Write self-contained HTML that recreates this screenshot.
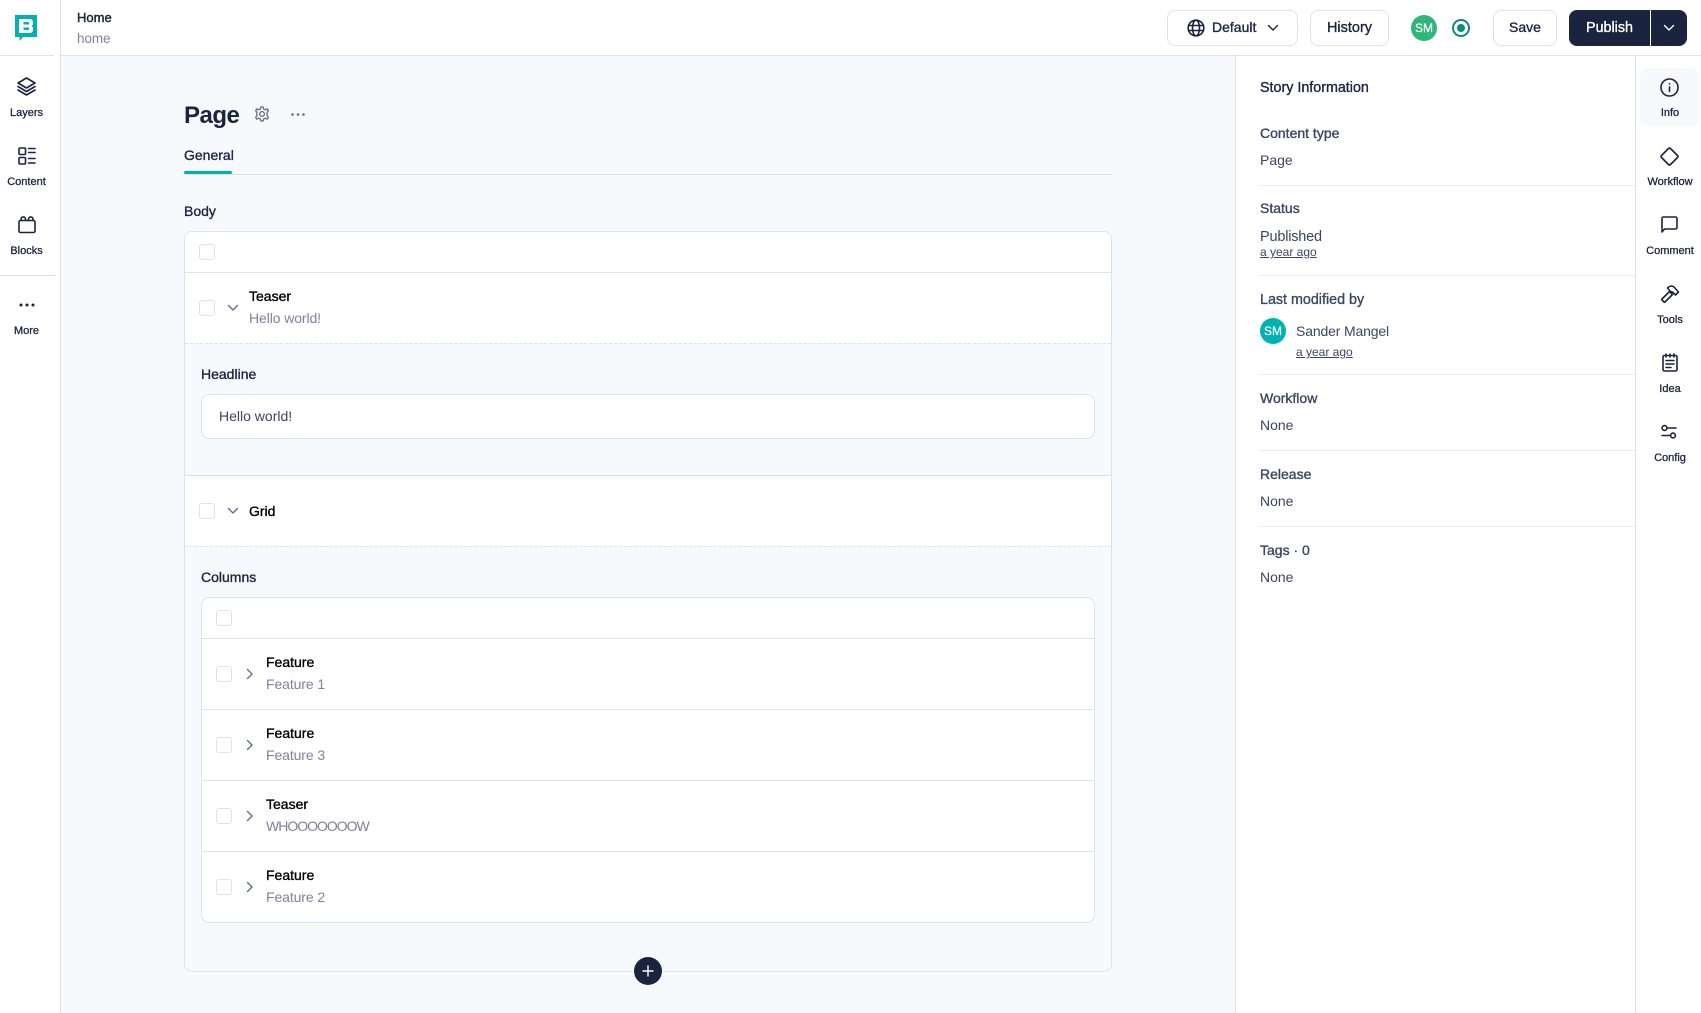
<!DOCTYPE html>
<html><head><meta charset="utf-8"><style>
*{box-sizing:border-box}
html,body{margin:0;padding:0}
body{width:1701px;height:1013px;overflow:hidden;position:relative;background:#f8f9fd;font-family:"Liberation Sans",sans-serif;color:#1b243f}
.a{position:absolute}
.t{position:absolute;white-space:nowrap;line-height:20px;height:20px;font-size:14px}
.d{margin-top:1px}
.m{-webkit-text-stroke:.35px currentColor}
.g{color:#7d829d;letter-spacing:-.1px}
.l{color:#3c4563}
.c{position:absolute;width:16px;height:16px;border:1px solid #dfe2ea;border-radius:3px;background:#fff}
.h{position:absolute;height:1px;background:#dfe2ea}
.lab{position:absolute;width:60px;text-align:center;font-size:11px;line-height:14px;color:#1b243f;-webkit-text-stroke:.3px currentColor;white-space:nowrap;margin-top:1px}
.btn{position:absolute;top:10px;height:36px;border:1px solid #dfe2ea;border-radius:8px;background:#fff}
svg{position:absolute;overflow:visible;fill:none;stroke:#1b243f;stroke-width:1.6;stroke-linecap:round;stroke-linejoin:round}
u{text-underline-offset:1px}
.ch{stroke:#666c88;stroke-width:1.4}
</style></head><body>

<!-- Main backgrounds -->
<div class="a" style="left:0;top:0;width:1701px;height:55px;background:#fff"></div>
<div class="h" style="left:60px;top:55px;width:1641px"></div>
<div class="a" style="left:0;top:0;width:61px;height:1013px;background:#fff;border-right:1px solid #dfe2ea"></div>
<div class="a" style="left:1235px;top:56px;width:466px;height:957px;background:#fff;border-left:1px solid #e3e5ee"></div>
<div class="a" style="left:1635px;top:56px;width:1px;height:957px;background:#dfe2ea"></div>

<!-- Left rail -->
<div class="h" style="left:0;top:55px;width:54px"></div>
<div class="h" style="left:0;top:275px;width:56px"></div>
<svg style="left:15px;top:15px" width="22" height="27" viewBox="0 0 22 27"><path style="stroke:none;fill:#00b3b0" d="M0 0H22V22H8L4.500 26V22H0Z"/><path style="stroke:none;fill:#fff" d="M4 4H16L18 6V9.500L16.500 11L18 12.500V16L16 18H4ZM8.500 7V9.500H14V7ZM8.500 12.500V15H14V12.500Z" fill-rule="evenodd"/></svg>

<svg style="left:17px;top:77px" width="19" height="19" viewBox="0 0 19 19"><path d="M9.500 1L18 6 9.500 11 1 6Z"/><path d="M1 9.500L9.500 14.500 18 9.500"/><path d="M1 13L9.500 18 18 13"/></svg>
<div class="lab" style="left:-3.500px;top:105px">Layers</div>
<svg style="left:18px;top:147px" width="18" height="18" viewBox="0 0 18 18"><rect x="1" y="1" width="6.500" height="6.500" rx="1"/><rect x="1" y="10.500" width="6.500" height="6.500" rx="1"/><path d="M10.500 1.500H17M10.500 5.500H17M10.500 11.500H17M10.500 16H17"/></svg>
<div class="lab" style="left:-3.500px;top:174px">Content</div>
<svg style="left:18px;top:216px" width="18" height="18" viewBox="0 0 18 18"><rect x="1" y="4.500" width="16" height="12" rx="1.500"/><path d="M3 4.500V3.200A1.800 1.800 0 0 1 7.500 3.200V4.500M10.500 4.500V3.200A1.800 1.800 0 0 1 15 3.200V4.500"/></svg>
<div class="lab" style="left:-3.500px;top:243px">Blocks</div>
<svg style="left:19px;top:303px" width="16" height="4" viewBox="0 0 16 4"><circle cx="2" cy="2" r="1.500" style="fill:#1b243f;stroke:none"/><circle cx="8" cy="2" r="1.500" style="fill:#1b243f;stroke:none"/><circle cx="14" cy="2" r="1.500" style="fill:#1b243f;stroke:none"/></svg>
<div class="lab" style="left:-3.500px;top:323px">More</div>

<!-- Top left text -->
<div class="t m d" style="left:77px;top:7px;font-size:13px;-webkit-text-stroke:.45px currentColor">Home</div>
<div class="t g d" style="left:77px;top:28px;font-size:13.500px">home</div>

<!-- Top right -->
<div class="btn" style="left:1167px;width:131px"></div>
<svg style="left:1187px;top:19px" width="18" height="18" viewBox="0 0 18 18"><circle cx="9" cy="9" r="7.800"/><ellipse cx="9" cy="9" rx="3.500" ry="7.800"/><path d="M1.500 6.500H16.500M1.500 11.500H16.500"/></svg>
<div class="t m" style="left:1212px;top:17px">Default</div>
<svg style="left:1267px;top:24px;stroke-width:1.400" width="12" height="8" viewBox="0 0 12 8"><path d="M1.500 1.500L6 6 10.500 1.500"/></svg>
<div class="btn" style="left:1310px;width:79px"></div>
<div class="t m d" style="left:1310px;width:79px;text-align:center;top:17px;font-size:14.500px">History</div>
<div class="a" style="left:1411px;top:15px;width:26px;height:26px;border-radius:50%;background:#2eb67d;color:#fff;font-size:12px;line-height:27px;text-align:center;-webkit-text-stroke:.2px #fff">SM</div>
<div class="a" style="left:1452px;top:19px;width:18px;height:18px;border-radius:50%;border:2px solid #0a8a80"></div>
<div class="a" style="left:1457px;top:24px;width:8px;height:8px;border-radius:50%;background:#0a8a80"></div>
<div class="btn" style="left:1493px;width:64px"></div>
<div class="t m" style="left:1493px;width:64px;text-align:center;top:17px">Save</div>
<div class="a" style="left:1569px;top:10px;width:118px;height:36px;background:#1b243f;border-radius:8px"></div>
<div class="a" style="left:1650px;top:10px;width:1px;height:36px;background:#fff"></div>
<div class="t m d" style="left:1569px;width:81px;text-align:center;top:17px;font-size:14.300px;color:#fff">Publish</div>
<svg style="left:1663px;top:24px;stroke:#fff;stroke-width:1.400" width="12" height="8" viewBox="0 0 12 8"><path d="M1.500 1.500L6 6 10.500 1.500"/></svg>

<!-- Page head -->
<div class="t d" style="left:184px;top:103px;font-size:24px;font-weight:bold;line-height:24px;height:24px;letter-spacing:-.5px">Page</div>
<svg style="left:254px;top:106px;stroke:#666c88;stroke-width:1.300" width="16" height="16" viewBox="0 0 16 16"><circle cx="8" cy="8" r="2.400"/><path d="M6.800 1H9.200L9.600 3 11.300 3.800 13.100 2.800 14.400 4.700 13 6.200 13.200 8 13 9.800 14.400 11.300 13.100 13.200 11.300 12.200 9.600 13 9.200 15H6.800L6.400 13 4.700 12.200 2.900 13.200 1.600 11.300 3 9.800 2.800 8 3 6.200 1.600 4.700 2.900 2.800 4.700 3.800 6.400 3Z"/></svg>
<svg style="left:291px;top:113px" width="14" height="3" viewBox="0 0 14 3"><circle cx="1.500" cy="1.500" r="1.300" style="fill:#666c88;stroke:none"/><circle cx="7" cy="1.500" r="1.300" style="fill:#666c88;stroke:none"/><circle cx="12.500" cy="1.500" r="1.300" style="fill:#666c88;stroke:none"/></svg>
<div class="t m" style="left:184px;top:145px">General</div>
<div class="a" style="left:184px;top:174px;width:928px;height:1px;background:#dfe2ea"></div>
<div class="a" style="left:184px;top:171px;width:48px;height:3px;background:#00b3b0;border-radius:2px"></div>
<div class="t m" style="left:184px;top:201px">Body</div>

<!-- Body box -->
<div class="a" style="left:184px;top:231px;width:928px;height:741px;border:1px solid #dfe2ea;border-radius:8px;background:#f8f9fd"></div>
<div class="a" style="left:185px;top:232px;width:926px;height:40px;background:#fff;border-radius:7px 7px 0 0"></div>
<div class="c" style="left:199px;top:244px"></div>
<div class="h" style="left:185px;top:272px;width:926px"></div>
<div class="a" style="left:185px;top:273px;width:926px;height:70px;background:#fff"></div>
<div class="c" style="left:199px;top:300px"></div>
<svg class="ch" style="left:227px;top:304px" width="12" height="8" viewBox="0 0 12 8"><path d="M1.500 1.500L6 6 10.500 1.500"/></svg>
<div class="t m" style="left:249px;top:286px;color:#000">Teaser</div>
<div class="t g" style="left:249px;top:308px">Hello world!</div>
<div class="a" style="left:185px;top:343px;width:926px;border-top:1px dashed #dfe2ea"></div>
<div class="t m" style="left:201px;top:364px">Headline</div>
<div class="a" style="left:201px;top:394px;width:894px;height:45px;background:#fff;border:1px solid #dfe2ea;border-radius:8px"></div>
<div class="t l" style="left:219px;top:406px">Hello world!</div>
<div class="h" style="left:185px;top:475px;width:926px"></div>
<div class="a" style="left:185px;top:476px;width:926px;height:70px;background:#fff"></div>
<div class="c" style="left:199px;top:503px"></div>
<svg class="ch" style="left:227px;top:507px" width="12" height="8" viewBox="0 0 12 8"><path d="M1.500 1.500L6 6 10.500 1.500"/></svg>
<div class="t m" style="left:249px;top:501px;color:#000">Grid</div>
<div class="a" style="left:185px;top:546px;width:926px;border-top:1px dashed #dfe2ea"></div>
<div class="t m" style="left:201px;top:567px">Columns</div>

<!-- Columns box -->
<div class="a" style="left:201px;top:597px;width:894px;height:326px;background:#fff;border:1px solid #dfe2ea;border-radius:8px"></div>
<div class="c" style="left:216px;top:610px"></div>
<div class="h" style="left:202px;top:638px;width:892px"></div>
<div class="c" style="left:216px;top:666px"></div>
<svg class="ch" style="left:246px;top:668px" width="8" height="12" viewBox="0 0 8 12"><path d="M1.500 1.500L6 6 1.500 10.500"/></svg>
<div class="t m" style="left:266px;top:652px;color:#000">Feature</div>
<div class="t g" style="left:266px;top:674px">Feature 1</div>
<div class="h" style="left:202px;top:709px;width:892px"></div>
<div class="c" style="left:216px;top:737px"></div>
<svg class="ch" style="left:246px;top:739px" width="8" height="12" viewBox="0 0 8 12"><path d="M1.500 1.500L6 6 1.500 10.500"/></svg>
<div class="t m" style="left:266px;top:723px;color:#000">Feature</div>
<div class="t g" style="left:266px;top:745px">Feature 3</div>
<div class="h" style="left:202px;top:780px;width:892px"></div>
<div class="c" style="left:216px;top:808px"></div>
<svg class="ch" style="left:246px;top:810px" width="8" height="12" viewBox="0 0 8 12"><path d="M1.500 1.500L6 6 1.500 10.500"/></svg>
<div class="t m" style="left:266px;top:794px;color:#000">Teaser</div>
<div class="t g" style="left:266px;top:816px;letter-spacing:-1px">WHOOOOOOOW</div>
<div class="h" style="left:202px;top:851px;width:892px"></div>
<div class="c" style="left:216px;top:879px"></div>
<svg class="ch" style="left:246px;top:881px" width="8" height="12" viewBox="0 0 8 12"><path d="M1.500 1.500L6 6 1.500 10.500"/></svg>
<div class="t m" style="left:266px;top:865px;color:#000">Feature</div>
<div class="t g" style="left:266px;top:887px">Feature 2</div>

<!-- Plus -->
<div class="a" style="left:634px;top:957px;width:28px;height:28px;border-radius:50%;background:#1b243f"></div>
<svg style="left:642px;top:965px;stroke:#fff;stroke-width:1.400" width="12" height="12" viewBox="0 0 12 12"><path d="M6 1V11M1 6H11"/></svg>

<!-- Story info -->
<div class="t m d" style="left:1260px;top:77px;font-size:14.300px">Story Information</div>
<div class="t m l" style="left:1260px;top:123px">Content type</div>
<div class="t l" style="left:1260px;top:150px">Page</div>
<div class="h" style="left:1260px;top:185px;width:375px;background:#e9ebf0"></div>
<div class="t m l" style="left:1260px;top:198px">Status</div>
<div class="t l d" style="left:1260px;top:226px;font-size:14.500px;letter-spacing:-.2px">Published</div>
<div class="t l" style="left:1260px;top:242px;font-size:12px"><u>a year ago</u></div>
<div class="h" style="left:1260px;top:275px;width:375px;background:#e9ebf0"></div>
<div class="t m l d" style="left:1260px;top:289px;font-size:14.300px">Last modified by</div>
<div class="a" style="left:1260px;top:318px;width:26px;height:26px;border-radius:50%;background:#00b3b0;color:#fff;font-size:12px;line-height:27px;text-align:center;-webkit-text-stroke:.2px #fff">SM</div>
<div class="t l" style="left:1296px;top:321px;letter-spacing:-.15px">Sander Mangel</div>
<div class="t l" style="left:1296px;top:342px;font-size:12px"><u>a year ago</u></div>
<div class="h" style="left:1260px;top:374px;width:375px;background:#e9ebf0"></div>
<div class="t m l" style="left:1260px;top:388px">Workflow</div>
<div class="t l" style="left:1260px;top:415px">None</div>
<div class="h" style="left:1260px;top:450px;width:375px;background:#e9ebf0"></div>
<div class="t m l" style="left:1260px;top:464px">Release</div>
<div class="t l" style="left:1260px;top:491px">None</div>
<div class="h" style="left:1260px;top:526px;width:375px;background:#e9ebf0"></div>
<div class="t m l" style="left:1260px;top:540px">Tags · 0</div>
<div class="t l" style="left:1260px;top:567px">None</div>

<!-- Right rail -->
<div class="a" style="left:1640px;top:68px;width:59px;height:59px;border-radius:8px;background:#f8f9fd"></div>
<svg style="left:1660px;top:77.500px" width="19" height="19" viewBox="0 0 19 19"><circle cx="9.500" cy="9.500" r="8.500"/><path d="M9.500 9V13.500M9.500 5.700V5.900"/></svg>
<div class="lab" style="left:1640px;top:105px">Info</div>
<svg style="left:1660px;top:146.500px" width="19" height="19" viewBox="0 0 19 19"><path d="M8.500 1.500Q9.500 .5 10.500 1.500L17.500 8.500Q18.500 9.500 17.500 10.500L10.500 17.500Q9.500 18.500 8.500 17.500L1.500 10.500Q.5 9.500 1.500 8.500Z"/></svg>
<div class="lab" style="left:1640px;top:174px">Workflow</div>
<svg style="left:1661px;top:216px" width="17" height="17" viewBox="0 0 17 17"><path d="M1 16V2.500A1.500 1.500 0 0 1 2.500 1H14.500A1.500 1.500 0 0 1 16 2.500V11.500A1.500 1.500 0 0 1 14.500 13H3.500Z"/></svg>
<div class="lab" style="left:1640px;top:243px">Comment</div>
<svg style="left:1661px;top:285px" width="18" height="18" viewBox="0 0 18 18"><path d="M1 14L8.500 6.500 11.500 9.500 4 17Q3.500 17.500 3 17L1 15Q.5 14.500 1 14Z"/><path d="M6.500 3C8.500 .8 11 .5 13 2L17.500 7 14.500 10 11.500 7 9.500 6.500Z"/></svg>
<div class="lab" style="left:1640px;top:312px">Tools</div>
<svg style="left:1662px;top:353px" width="16" height="19" viewBox="0 0 16 19"><rect x="1" y="2.500" width="14" height="15.500" rx="1.500"/><path d="M4 1V4M8 1V4M12 1V4M4 7.500H12M4 11H12M4 14.500H9"/></svg>
<div class="lab" style="left:1640px;top:381px">Idea</div>
<svg style="left:1661px;top:425px" width="16" height="14" viewBox="0 0 16 14"><circle cx="3.500" cy="3" r="2.400"/><circle cx="12" cy="10.500" r="2.400"/><path d="M6 3H15M1 10.500H9.500"/></svg>
<div class="lab" style="left:1640px;top:450px">Config</div>

</body></html>
